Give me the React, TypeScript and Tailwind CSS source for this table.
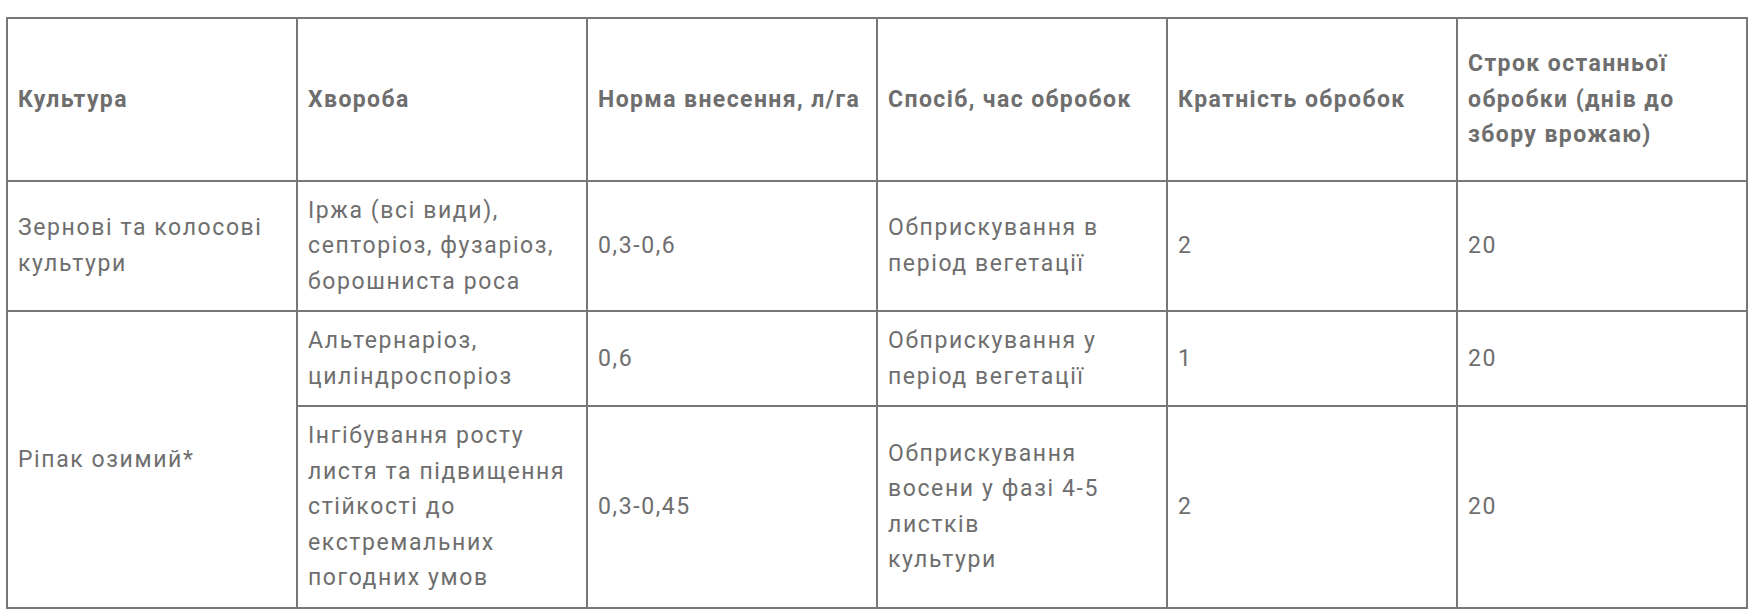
const headers = [
  'Культура',
  'Хвороба',
  'Норма внесення, л/га',
  'Спосіб, час обробок',
  'Кратність обробок',
  'Строк останньої обробки (днів до збору врожаю)',
];

const cell = 'border-2 border-[#777777] px-[10px] py-[11px] align-middle';

export default function App() {
  return (
    <main className="min-h-screen bg-white pl-[6px] pt-[17px] font-['Roboto',sans-serif] text-[23px] leading-[35.5px] tracking-[1.6px] text-[#6e6e6e]">
      <table className="w-[1742px] table-fixed border-collapse">
        <thead>
          <tr>
            {headers.map((h) => (
              <th key={h} className="border-2 border-[#777777] px-[10px] py-[27px] text-left align-middle font-bold tracking-[1.4px]">
                {h}
              </th>
            ))}
          </tr>
        </thead>
        <tbody>
          <tr>
            <td className={cell}>Зернові та колосові культури</td>
            <td className={cell}>Іржа (всі види), септоріоз, фузаріоз, борошниста роса</td>
            <td className={cell}>0,3-0,6</td>
            <td className={cell}>Обприскування в період вегетації</td>
            <td className={cell}>2</td>
            <td className={cell}>20</td>
          </tr>
          <tr>
            <td rowSpan={2} className={cell}>Ріпак озимий*</td>
            <td className={cell}>Альтернаріоз, циліндроспоріоз</td>
            <td className={cell}>0,6</td>
            <td className={cell}>Обприскування у період вегетації</td>
            <td className={cell}>1</td>
            <td className={cell}>20</td>
          </tr>
          <tr>
            <td className={cell}>Інгібування росту листя та підвищення стійкості до екстремальних погодних умов</td>
            <td className={cell}>0,3-0,45</td>
            <td className={cell}>
              Обприскування восени у фазі 4-5 листків
              <br />
              культури
            </td>
            <td className={cell}>2</td>
            <td className={cell}>20</td>
          </tr>
        </tbody>
      </table>
    </main>
  );
}
